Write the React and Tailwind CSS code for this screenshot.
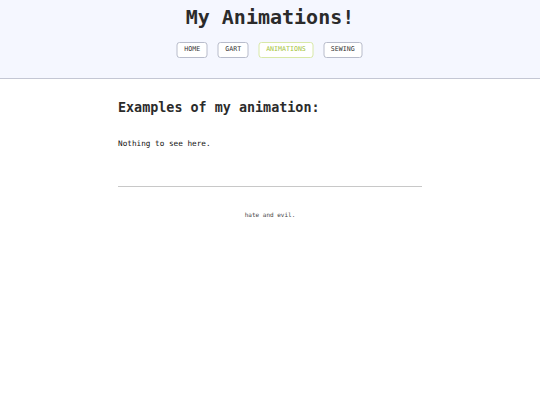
export default function App() {
  const links = [
    { t: "HOME", active: false },
    { t: "GART", active: false },
    { t: "ANIMATIONS", active: true },
    { t: "SEWING", active: false },
  ];
  return (
    <div className="min-h-[405px] bg-white" style={{ fontFamily: '"DejaVu Sans Mono", monospace' }}>
      <header className="bg-[#f5f7ff] border-b border-[#c4c7d4] pt-[5px] pb-[20px] flex flex-col items-center">
        <h1 className="text-[20px] leading-[24px] font-bold text-[#2b2b2b]">My Animations!</h1>
        <nav className="flex gap-[10px] mt-[13px] -translate-x-[0.5px]">
          {links.map((l) => (
            <a
              key={l.t}
              className={
                "h-[16px] px-[6.5px] flex items-center rounded-[3px] border text-[6.6px] " +
                (l.active
                  ? "border-[#d8e8a8] text-[#a4c43a] bg-white"
                  : "border-[#b8bccb] text-[#333] bg-white")
              }
            >
              {l.t}
            </a>
          ))}
        </nav>
      </header>
      <main className="w-[304px] mx-auto">
        <h2 className="text-[13.4px] leading-[16px] font-bold text-[#2b2b2b] mt-[21px]">Examples of my animation:</h2>
        <p className="text-[7.7px] leading-[10px] text-[#111] mt-[23px]">Nothing to see here.</p>
        <hr className="border-0 border-t border-[#c8c8c8] mt-[37px]" />
        <p className="text-[6px] leading-[8px] text-[#444] text-center mt-[24px]">hate and evil.</p>
      </main>
    </div>
  );
}
